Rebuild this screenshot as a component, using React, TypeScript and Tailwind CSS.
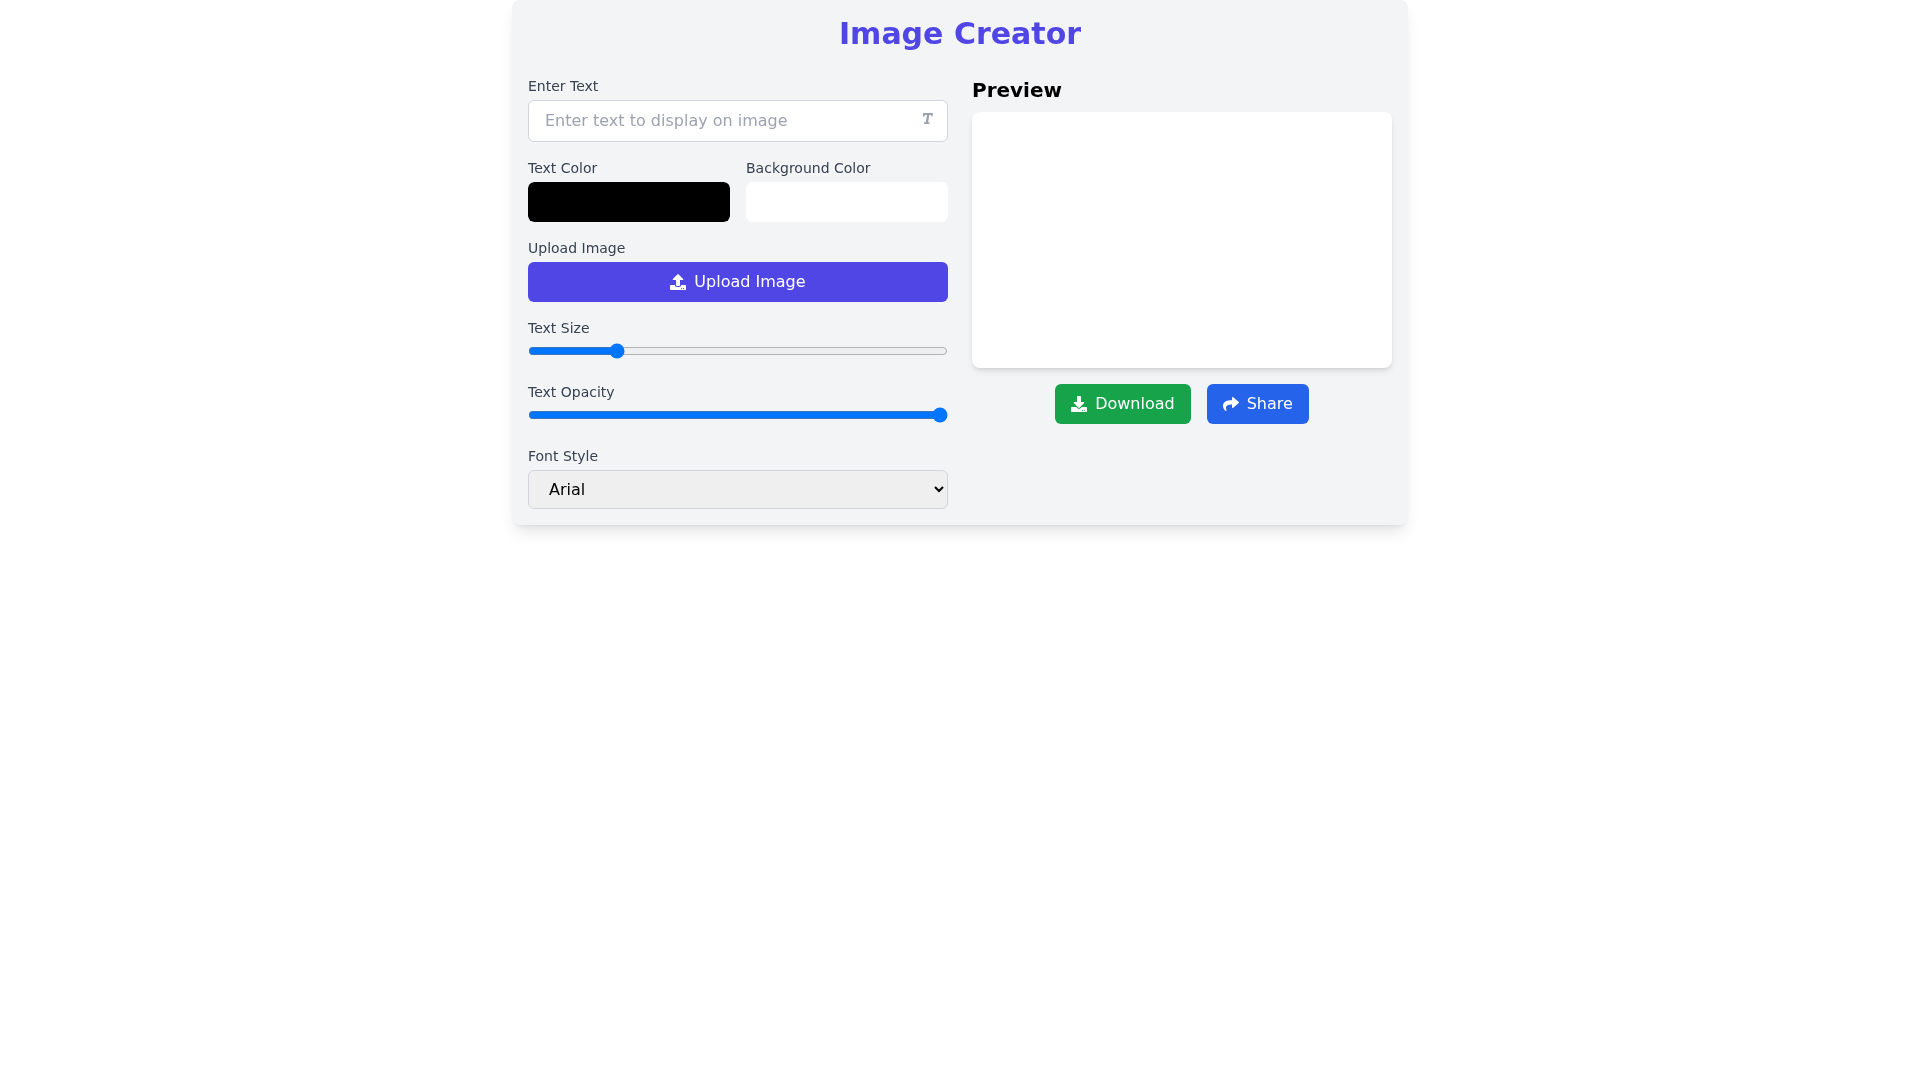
import React from "react";
import { FaUpload, FaDownload, FaShare } from "react-icons/fa";

const font = "font-['DejaVu_Sans',sans-serif]";
const labelCls = "block text-sm font-medium text-[#374151] mb-1";
const colorCls =
  "block w-full h-10 rounded-md overflow-hidden [&::-webkit-color-swatch-wrapper]:p-0 [&::-webkit-color-swatch]:border-0 [&::-webkit-color-swatch]:rounded-md";

export default function App() {
  return (
    <div className={`${font} bg-white min-h-screen`}>
      <div className="max-w-4xl mx-auto p-4 bg-[#f3f4f6] rounded-lg shadow-lg transform-gpu">
        <h1 className="text-3xl font-bold text-center text-[#4f46e5] mb-6">Image Creator</h1>
        <div className="grid grid-cols-2 gap-6">
          <div className="flex flex-col gap-4">
            <div>
              <label className={labelCls}>Enter Text</label>
              <div className="relative">
                <input
                  type="text"
                  placeholder="Enter text to display on image"
                  className="w-full px-4 py-2 bg-white border border-[#d1d5db] rounded-md text-base placeholder:text-[#9ca3af] outline-none"
                />
                <svg
                  viewBox="0 0 11 11"
                  className="absolute right-[15px] top-[13px] w-[11px] h-[11px] fill-[#9ca3af]"
                >
                  <path d="M1.2 0H11L10.5 3.4H9.4L9.3 2H7.4L6.1 9.2H7.6L7.3 11H1.9L2.2 9.2H3.7L5 2H3.1L2.2 3.4H0.7Z" />
                </svg>
              </div>
            </div>
            <div className="grid grid-cols-2 gap-4">
              <div>
                <label className={labelCls}>Text Color</label>
                <input type="color" defaultValue="#000000" className={colorCls} />
              </div>
              <div>
                <label className={labelCls}>Background Color</label>
                <input type="color" defaultValue="#ffffff" className={colorCls} />
              </div>
            </div>
            <div>
              <label className={labelCls}>Upload Image</label>
              <button className="w-full h-10 flex items-center justify-center gap-2 bg-[#4f46e5] text-white rounded-md px-4 text-base">
                <FaUpload />
                Upload Image
              </button>
            </div>
            <div>
              <label className={labelCls}>Text Size</label>
              <input type="range" min={12} max={72} defaultValue={24} className="w-full" />
            </div>
            <div>
              <label className={labelCls}>Text Opacity</label>
              <input type="range" min={0} max={1} step={0.1} defaultValue={1} className="w-full" />
            </div>
            <div>
              <label className={labelCls}>Font Style</label>
              <select className="block w-full h-[39px] px-4 bg-[#efefef] border border-[#d1d5db] rounded-md text-base text-black">
                <option>Arial</option>
              </select>
            </div>
          </div>
          <div>
            <h2 className="text-xl font-bold text-black mb-2">Preview</h2>
            <div className="h-64 w-full bg-white rounded-lg shadow-md" />
            <div className="mt-4 flex justify-center gap-4">
              <button className="h-10 flex items-center gap-2 bg-[#16a34a] text-white rounded-md px-4 text-base">
                <FaDownload />
                Download
              </button>
              <button className="h-10 flex items-center gap-2 bg-[#2563eb] text-white rounded-md px-4 text-base">
                <FaShare />
                Share
              </button>
            </div>
          </div>
        </div>
      </div>
    </div>
  );
}
